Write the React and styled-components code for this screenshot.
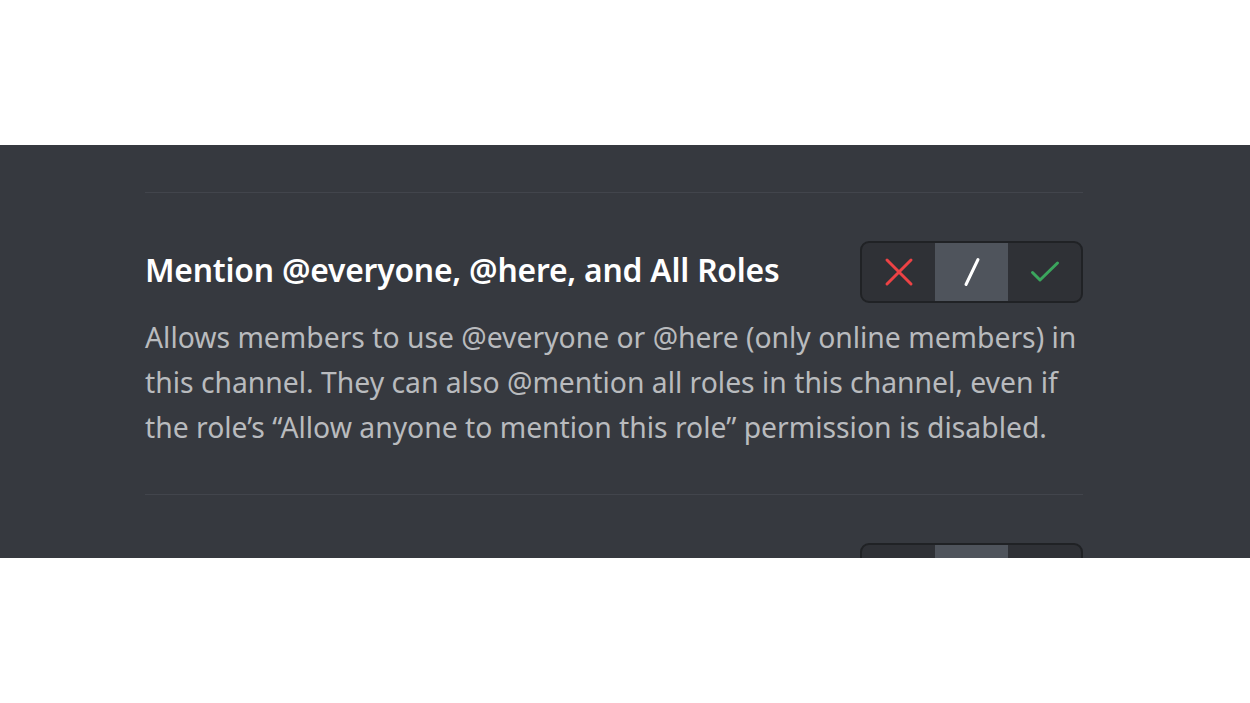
import React from "react";
import styled, { createGlobalStyle } from "styled-components";

const GlobalStyle = createGlobalStyle`
  html, body {
    margin: 0;
    padding: 0;
    background: #ffffff;
  }
  body {
    font-family: "Noto Sans", Lato, sans-serif;
  }
`;

const Page = styled.div`
  padding: 145px 0;
`;

const Band = styled.div`
  background: #36393f;
  height: 413px;
  overflow: hidden;
  padding-top: 47px;
  box-sizing: border-box;
`;

const List = styled.div`
  width: 938px;
  margin-left: 145px;
`;

const Row = styled.div`
  border-top: 1px solid #42454c;
  padding: 48px 0 44px;
`;

const Header = styled.div`
  display: flex;
  align-items: center;
  justify-content: space-between;
  height: 62px;
`;

const Title = styled.h3`
  margin: 0 0 6px;
  color: #ffffff;
  font-size: 31.8px;
  font-weight: 600;
  letter-spacing: -0.2px;
`;

const Description = styled.p`
  margin: 12px 0 0;
  color: #b9bbbe;
  font-size: 28.3px;
  line-height: 45px;
  font-weight: 400;
`;

const Toggle = styled.div`
  display: flex;
  height: 62px;
  border: 2px solid #202225;
  border-radius: 9px;
  overflow: hidden;
  box-sizing: border-box;
  background: #2f3136;
`;

const Segment = styled.div`
  width: 73px;
  display: flex;
  align-items: center;
  justify-content: center;
  background: ${(p) => (p.active ? "#4f545c" : "transparent")};
`;

const DenyIcon = () => (
  <svg width="32" height="32" viewBox="0 0 32 32">
    <path
      d="M4 4 L28 28 M28 4 L4 28"
      stroke="#ed4245"
      strokeWidth="3"
      strokeLinecap="round"
    />
  </svg>
);

const PassIcon = () => (
  <svg width="32" height="32" viewBox="0 0 32 32">
    <path
      d="M22 3.5 L10 28.5"
      stroke="#ffffff"
      strokeWidth="3"
      strokeLinecap="round"
    />
  </svg>
);

const AllowIcon = () => (
  <svg width="32" height="32" viewBox="0 0 32 32">
    <path
      d="M3.5 16.5 L11 24 L28.5 7"
      fill="none"
      stroke="#3ba55d"
      strokeWidth="3"
      strokeLinecap="round"
      strokeLinejoin="round"
    />
  </svg>
);

const permissions = [
  {
    id: "mention",
    name: "Mention @everyone, @here, and All Roles",
    description:
      "Allows members to use @everyone or @here (only online members) in this channel. They can also @mention all roles in this channel, even if the role\u2019s \u201cAllow anyone to mention this role\u201d permission is disabled.",
  },
  {
    id: "manage",
    name: "Manage Messages",
    description:
      "Allows members to delete messages by other members or pin any message.",
  },
];

const PermissionRow = ({ permission }) => (
  <Row>
    <Header>
      <Title>{permission.name}</Title>
      <Toggle>
        <Segment>
          <DenyIcon />
        </Segment>
        <Segment active>
          <PassIcon />
        </Segment>
        <Segment>
          <AllowIcon />
        </Segment>
      </Toggle>
    </Header>
    <Description>{permission.description}</Description>
  </Row>
);

export default function App() {
  return (
    <>
      <GlobalStyle />
      <Page>
        <Band>
          <List>
            {permissions.map((p) => (
              <PermissionRow key={p.id} permission={p} />
            ))}
          </List>
        </Band>
      </Page>
    </>
  );
}
